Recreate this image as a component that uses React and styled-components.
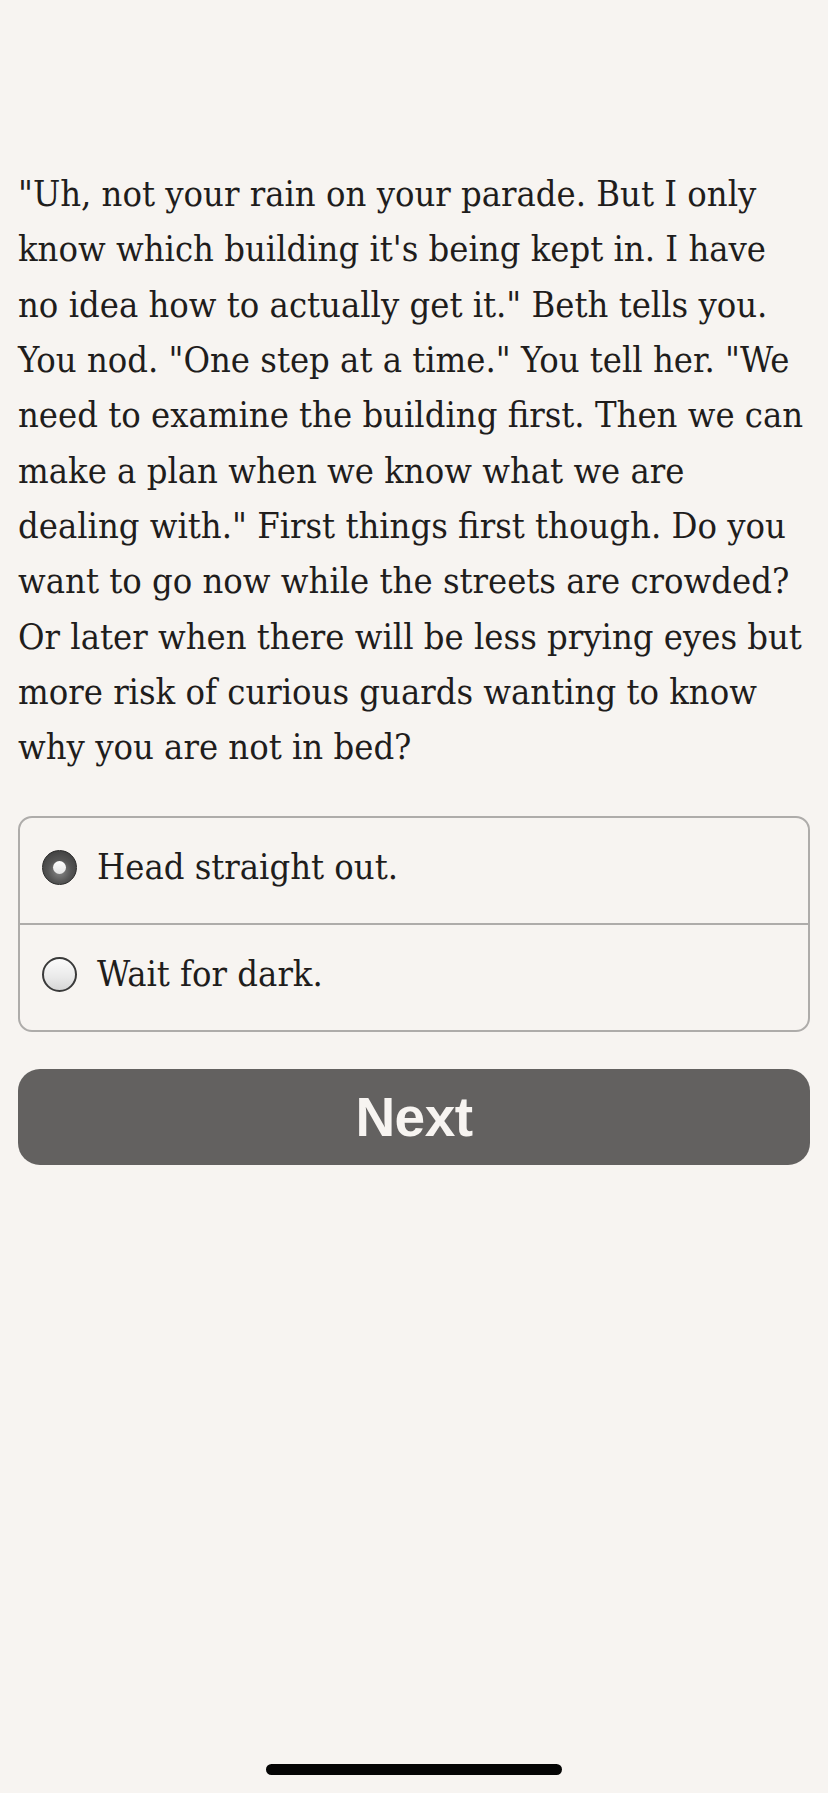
import React, { useState } from "react";
import styled, { createGlobalStyle } from "styled-components";

const GlobalStyle = createGlobalStyle`
  html, body {
    margin: 0;
    padding: 0;
    background: #f7f4f1;
  }
  body {
    font-family: "DejaVu Serif Condensed", "DejaVu Serif", "Liberation Serif", serif;
    -webkit-font-smoothing: antialiased;
  }
`;

const Page = styled.main`
  min-height: 100vh;
  box-sizing: border-box;
  padding: 166px 18px 0;
  background: #f7f4f1;
  color: #1f1d1c;
`;

const Story = styled.p`
  margin: 0;
  font-family: "DejaVu Serif Condensed", "DejaVu Serif", serif;
  font-size: 36px;
  line-height: 55.35px;
  color: #1f1d1c;
`;

const Choices = styled.fieldset`
  margin: 41px 0 0;
  padding: 0;
  border: 2px solid #aeacaa;
  border-radius: 14px;
  overflow: hidden;
`;

const ChoiceRow = styled.label`
  display: flex;
  align-items: center;
  gap: 20px;
  height: 105px;
  padding: 0 22px 6px;
  box-sizing: border-box;
  cursor: pointer;
  & + & {
    border-top: 2px solid #aeacaa;
    height: 107px;
  }
`;

const HiddenInput = styled.input`
  position: absolute;
  opacity: 0;
  pointer-events: none;
`;

const RadioDot = styled.span`
  position: relative;
  flex: none;
  width: 35px;
  height: 35px;
  border-radius: 50%;
  box-sizing: border-box;
  border: ${(p) => (p.$checked ? "1px solid #2a2a2a" : "2.5px solid #3a3a3a")};
  background: ${(p) =>
    p.$checked
      ? "radial-gradient(circle at 50% 60%, #8a8a8a 0%, #555 45%, #353535 100%)"
      : "linear-gradient(180deg, #fbfbfb 0%, #e9e9e9 60%, #d6d6d6 100%)"};
  &::after {
    content: "";
    display: ${(p) => (p.$checked ? "block" : "none")};
    position: absolute;
    left: 50%;
    top: 50%;
    width: 13px;
    height: 13px;
    margin: -6.5px 0 0 -6.5px;
    border-radius: 50%;
    background: linear-gradient(180deg, #ffffff 0%, #e4e4e4 100%);
  }
`;

const ChoiceText = styled.span`
  font-family: "DejaVu Serif Condensed", "DejaVu Serif", serif;
  font-size: 36px;
  line-height: 1;
  color: #1f1d1c;
`;

const NextButton = styled.button`
  display: block;
  width: 100%;
  height: 96px;
  margin-top: 37px;
  border: none;
  border-radius: 22px;
  background: #636160;
  color: #f7f4f1;
  font-family: "Liberation Sans", Arial, sans-serif;
  font-weight: 700;
  font-size: 55px;
  letter-spacing: -0.5px;
  cursor: pointer;
`;

const HomeIndicator = styled.div`
  position: fixed;
  left: 50%;
  bottom: 18px;
  width: 296px;
  height: 11px;
  margin-left: -148px;
  border-radius: 6px;
  background: #050505;
`;

const options = ["Head straight out.", "Wait for dark."];

export default function App() {
  const [choice, setChoice] = useState(0);
  return (
    <>
      <GlobalStyle />
      <Page>
        <Story>
          "Uh, not your rain on your parade. But I only know which building it's
          being kept in. I have no idea how to actually get it." Beth tells you.
          You nod. "One step at a time." You tell her. "We need to examine the
          building first. Then we can make a plan when we know what we are
          dealing with." First things first though. Do you want to go now while
          the streets are crowded? Or later when there will be less prying eyes
          but more risk of curious guards wanting to know why you are not in bed?
        </Story>
        <Choices>
          {options.map((opt, i) => (
            <ChoiceRow key={opt}>
              <HiddenInput
                type="radio"
                name="choice"
                checked={choice === i}
                onChange={() => setChoice(i)}
              />
              <RadioDot $checked={choice === i} />
              <ChoiceText>{opt}</ChoiceText>
            </ChoiceRow>
          ))}
        </Choices>
        <NextButton type="button">Next</NextButton>
      </Page>
      <HomeIndicator />
    </>
  );
}
